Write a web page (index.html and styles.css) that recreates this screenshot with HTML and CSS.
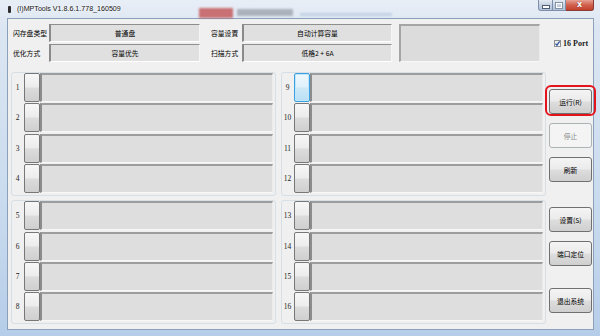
FILE: index.html
```html
<!DOCTYPE html>
<html lang="zh-CN">
<head>
  <meta charset="UTF-8">
  <title>MPTools</title>
  <link rel="stylesheet" href="styles.css">
</head>
<body>
  <div class="window">
    <div class="titlebar">
      <span class="app-icon"></span>
      <span class="title">(I)MPTools V1.8.6.1.778_160509</span>
      <span class="glass glass-red"></span>
      <span class="glass glass-text"></span>
      <span class="glass glass-line"></span>
      <div class="caption">
        <span class="cap cap-min"><i></i></span>
        <span class="cap cap-max"><i></i></span>
        <span class="cap cap-close">x</span>
      </div>
    </div>

    <div class="client">
      <div class="top">
        <div class="fields">
          <span class="label">闪存盘类型</span>
          <span class="field">普通盘</span>
          <span class="label label-2">容量设置</span>
          <span class="field">自动计算容量</span>
          <span class="label">优化方式</span>
          <span class="field">容量优先</span>
          <span class="label label-2">扫描方式</span>
          <span class="field">低格2 + 6A</span>
        </div>
        <div class="preview"></div>
        <label class="port-check">
          <span class="check">
            <svg width="7" height="7" viewBox="0 0 7 7"><path d="M1.5 3.6 L3 5.2 L5.6 1.4" fill="none" stroke="#2b4f9e" stroke-width="1.2"/></svg>
          </span>
          16 Port
        </label>
      </div>

      <div class="main">
        <div class="col">
          <div class="group">
            <div class="port"><span class="num">1</span><span class="port-btn"></span><span class="bar"></span></div>
            <div class="port"><span class="num">2</span><span class="port-btn"></span><span class="bar"></span></div>
            <div class="port"><span class="num">3</span><span class="port-btn"></span><span class="bar"></span></div>
            <div class="port"><span class="num">4</span><span class="port-btn"></span><span class="bar"></span></div>
          </div>
          <div class="group">
            <div class="port"><span class="num">5</span><span class="port-btn"></span><span class="bar"></span></div>
            <div class="port"><span class="num">6</span><span class="port-btn"></span><span class="bar"></span></div>
            <div class="port"><span class="num">7</span><span class="port-btn"></span><span class="bar"></span></div>
            <div class="port"><span class="num">8</span><span class="port-btn"></span><span class="bar"></span></div>
          </div>
        </div>

        <div class="col">
          <div class="group">
            <div class="port"><span class="num">9</span><span class="port-btn focused"></span><span class="bar"></span></div>
            <div class="port"><span class="num">10</span><span class="port-btn"></span><span class="bar"></span></div>
            <div class="port"><span class="num">11</span><span class="port-btn"></span><span class="bar"></span></div>
            <div class="port"><span class="num">12</span><span class="port-btn"></span><span class="bar"></span></div>
          </div>
          <div class="group">
            <div class="port"><span class="num">13</span><span class="port-btn"></span><span class="bar"></span></div>
            <div class="port"><span class="num">14</span><span class="port-btn"></span><span class="bar"></span></div>
            <div class="port"><span class="num">15</span><span class="port-btn"></span><span class="bar"></span></div>
            <div class="port"><span class="num">16</span><span class="port-btn"></span><span class="bar"></span></div>
          </div>
        </div>

        <div class="actions">
          <button class="btn btn-run">运行(R)</button>
          <button class="btn" disabled>停止</button>
          <button class="btn">刷新</button>
          <button class="btn btn-sep">设置(S)</button>
          <button class="btn">端口定位</button>
          <button class="btn btn-exit">退出系统</button>
        </div>
      </div>
    </div>
  </div>
</body>
</html>
```

FILE: styles.css
```css
* {
  box-sizing: border-box;
}

body {
  margin: 0;
  background: #ffffff;
  font-family: "Liberation Sans", "Noto Sans CJK SC", sans-serif;
}

.window {
  width: 600px;
  height: 336px;
  display: flex;
  flex-direction: column;
  position: relative;
  overflow: hidden;
  background: linear-gradient(to bottom, #e8eef6 0%, #dce6f2 8%, #c9dbee 60%, #b6cde9 100%);
}

/* Title bar */
.titlebar {
  height: 18px;
  display: flex;
  align-items: center;
  position: relative;
  flex-shrink: 0;
}

.app-icon {
  width: 3px;
  height: 7px;
  margin-left: 8px;
  background: #2e2e2e;
  border-radius: 1px;
}

.title {
  margin-left: 6px;
  font-size: 7.1px;
  color: #111;
  text-shadow: 0 0 3px #fff, 0 0 2px #fff;
  position: relative;
  z-index: 1;
}

.glass {
  position: absolute;
  filter: blur(1.2px);
}

.glass-red {
  left: 199px;
  top: 8px;
  width: 34px;
  height: 10px;
  background: #c04848;
  opacity: 0.75;
}

.glass-text {
  left: 237px;
  top: 9px;
  width: 56px;
  height: 7px;
  background: #6a6f78;
  opacity: 0.45;
}

.glass-line {
  left: 300px;
  top: 13px;
  width: 92px;
  height: 3px;
  background: #7f9bc4;
  opacity: 0.3;
}

.caption {
  position: absolute;
  top: 0;
  right: 6px;
  display: flex;
}

.cap {
  height: 11px;
  border: 1px solid #7d8ea8;
  border-top: none;
  display: flex;
  align-items: center;
  justify-content: center;
  background: linear-gradient(to bottom, #e3eaf3, #c3d0e1 55%, #b1c2da);
}

.cap-min {
  width: 15px;
  border-radius: 0 0 0 3px;
}

.cap-min i {
  width: 6px;
  height: 2px;
  margin-top: 3px;
  background: #fff;
  outline: 1px solid #4f5e73;
}

.cap-max {
  width: 13px;
  border-left: none;
}

.cap-max i {
  width: 6px;
  height: 5px;
  border: 1px solid #fff;
  outline: 1px solid #8391a5;
}

.cap-close {
  width: 28px;
  border-left: none;
  border-color: #8b3b33;
  border-radius: 0 0 3px 0;
  background: linear-gradient(to bottom, #e6a193, #d0604d 50%, #c2412d);
  color: #fff;
  font-family: "DejaVu Sans", sans-serif;
  font-weight: bold;
  font-size: 8px;
  line-height: 1;
  text-shadow: 0 0 1px #5a1a12;
}

/* Client area */
.client {
  flex: 1;
  margin: 0 6px 6px 7px;
  border: 1px solid #8ba0bb;
  background: #f0f0f0;
  padding: 5px 1px 0 3px;
  display: flex;
  flex-direction: column;
  font-family: "Noto Sans CJK SC", "Liberation Sans", sans-serif;
  font-size: 6.8px;
  color: #000;
}

.top {
  display: flex;
  align-items: flex-start;
  padding-left: 2px;
  height: 38px;
}

.fields {
  display: grid;
  grid-template-columns: 36px 151px 42px 150px;
  grid-template-rows: 18px 18px;
  row-gap: 2px;
}

.label {
  display: flex;
  align-items: center;
  white-space: nowrap;
}

.label-2 {
  padding-left: 11px;
}

.field {
  display: flex;
  align-items: center;
  justify-content: center;
  white-space: nowrap;
  background: #e0e0e0;
  border-top: 1px solid #8e8e8e;
  border-left: 2px solid #8a8a8a;
  border-right: 1px solid #f6f6f6;
  border-bottom: 1px solid #ffffff;
}

.preview {
  width: 141px;
  height: 38px;
  margin-left: 7px;
  background: #dcdcdc;
  border-top: 2px solid #a5a5a5;
  border-left: 2px solid #a5a5a5;
  border-right: 1px solid #ececec;
  border-bottom: 1px solid #f8f8f8;
}

.port-check {
  margin-left: 14px;
  margin-top: 15px;
  display: flex;
  align-items: center;
  gap: 2px;
  font-family: "Liberation Serif", serif;
  font-weight: bold;
  font-size: 8px;
  color: #222;
}

.check {
  width: 7px;
  height: 7px;
  border: 1px solid #8e8f8f;
  background: linear-gradient(135deg, #e6e6e6, #ffffff);
  display: flex;
  align-items: center;
  justify-content: center;
}

.check svg {
  display: block;
  margin: -1px;
}

/* Port groups */
.main {
  display: flex;
  margin-top: 10px;
}

.col {
  width: 265px;
  display: flex;
  flex-direction: column;
  gap: 4px;
}

.col + .col {
  margin-left: 5px;
}

.group {
  border: 1px solid #d5dfe5;
  border-radius: 3px;
  padding: 0 2px 2px 1px;
  display: flex;
  flex-direction: column;
  gap: 1.4px;
}

.port {
  height: 29px;
  display: grid;
  grid-template-columns: 11px 16px 1fr;
}

.num {
  display: flex;
  align-items: center;
  justify-content: center;
  padding-right: 2px;
  font-family: "Liberation Serif", serif;
  font-size: 7.5px;
  color: #1a1a1a;
}

.port-btn {
  border: 1px solid #777;
  border-radius: 2px;
  background: linear-gradient(to bottom, #f7f7f7 0%, #ececec 48%, #dcdcdc 52%, #cfcfcf 100%);
}

.port-btn.focused {
  border-color: #3c9fe0;
  box-shadow: inset 0 0 0 1px #c0e6fa;
  background: linear-gradient(to bottom, #eef8fd 0%, #e0f1fb 48%, #cde9f8 52%, #b9dff5 100%);
}

.bar {
  background: #dedede;
  border-top: 2px solid #9d9d9d;
  border-left: 2px solid #8c8c8c;
  border-right: 1px solid #ebebeb;
  border-bottom: 1px solid #f7f7f7;
}

/* Action buttons */
.actions {
  width: 43px;
  margin-left: 3px;
  padding-top: 17px;
  display: flex;
  flex-direction: column;
}

.btn {
  height: 25px;
  margin: 0;
  padding: 0;
  border: 1px solid #707070;
  border-radius: 3px;
  background: linear-gradient(to bottom, #f4f4f4 0%, #ebebeb 48%, #dddddd 52%, #cfcfcf 100%);
  font-family: "Noto Sans CJK SC", "Liberation Sans", sans-serif;
  font-size: 6.8px;
  color: #000;
  white-space: nowrap;
  position: relative;
}

.btn + .btn {
  margin-top: 9px;
}

.btn:disabled {
  border-color: #adb2b5;
  background: #f4f4f4;
  color: #8a8a8a;
}

.btn-run::after {
  content: "";
  position: absolute;
  left: -5px;
  right: -5px;
  top: -5px;
  bottom: -3px;
  border: 2px solid #e3141c;
  border-radius: 6px;
}

.actions .btn-sep {
  margin-top: 25px;
}

.actions .btn-exit {
  margin-top: 22px;
}
```
